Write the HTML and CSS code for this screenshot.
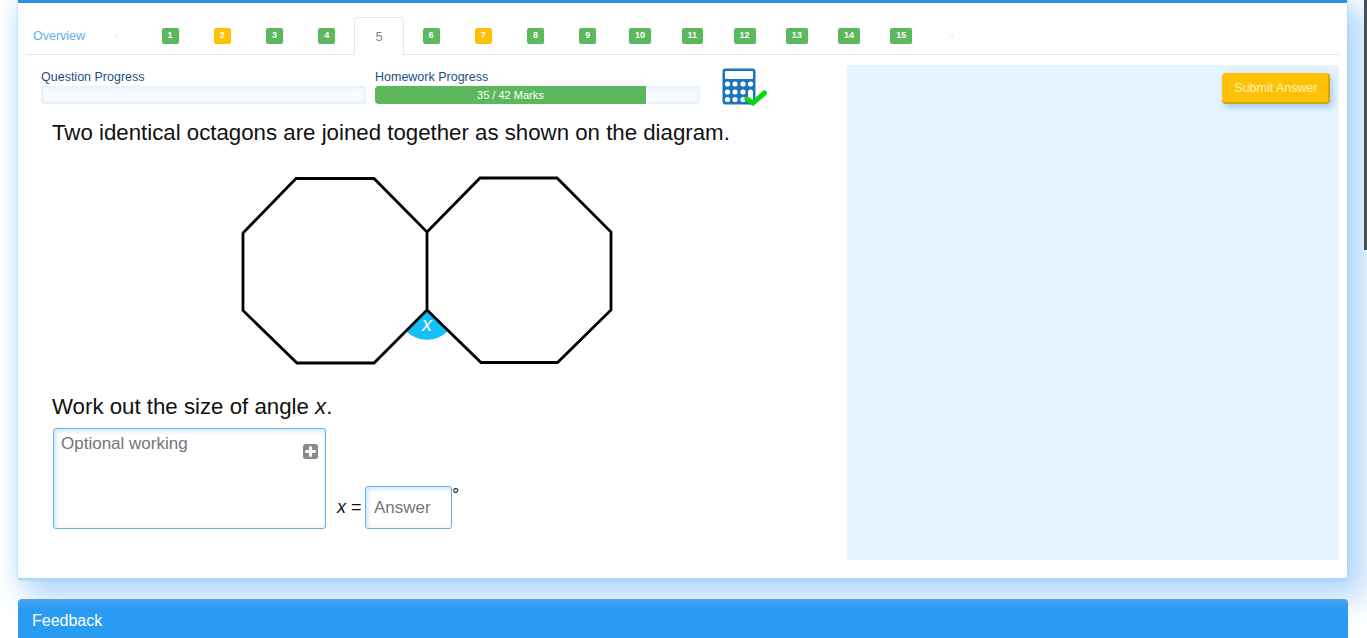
FILE: index.html
```html
<!DOCTYPE html>
<html lang="en">
<head>
<meta charset="utf-8">
<title>Question 5</title>
<link rel="stylesheet" href="styles.css">
</head>
<body>
<div class="scrollthumb"></div>
<main class="panel">
  <nav class="tabs">
    <a class="tab-overview">Overview</a>
    <span class="arrow arrow-left">«</span>
    <div class="tab"><span class="badge green">1</span></div>
    <div class="tab"><span class="badge amber">2</span></div>
    <div class="tab"><span class="badge green">3</span></div>
    <div class="tab"><span class="badge green">4</span></div>
    <div class="tab active">5</div>
    <div class="tab"><span class="badge green">6</span></div>
    <div class="tab"><span class="badge amber">7</span></div>
    <div class="tab"><span class="badge green">8</span></div>
    <div class="tab"><span class="badge green">9</span></div>
    <div class="tab"><span class="badge green">10</span></div>
    <div class="tab"><span class="badge green">11</span></div>
    <div class="tab"><span class="badge green">12</span></div>
    <div class="tab"><span class="badge green">13</span></div>
    <div class="tab"><span class="badge green">14</span></div>
    <div class="tab"><span class="badge green">15</span></div>
    <span class="arrow arrow-right">»</span>
  </nav>
  <div class="content">
    <section class="question">
      <div class="progress-row">
        <div class="progress-col">
          <div class="progress-label">Question Progress</div>
          <div class="bar"></div>
        </div>
        <div class="progress-col">
          <div class="progress-label">Homework Progress</div>
          <div class="bar"><div class="bar-fill" style="width:83.3%">35 / 42 Marks</div></div>
        </div>
        <svg class="calc" width="46" height="38" viewBox="0 0 46 38" aria-hidden="true">
          <rect x="0.5" y="0.5" width="33" height="36" rx="3" fill="#1b75bb"/>
          <rect x="3" y="3" width="28" height="8" rx="1" fill="#fff"/>
          <g fill="#fff">
            <circle cx="5.500" cy="16" r="2.600"/><circle cx="13" cy="16" r="2.600"/><circle cx="21" cy="16" r="2.600"/><circle cx="28.500" cy="16" r="2.600"/>
            <circle cx="5.500" cy="24" r="2.600"/><circle cx="13" cy="24" r="2.600"/><circle cx="21" cy="24" r="2.600"/>
            <circle cx="5.500" cy="31.500" r="2.600"/><circle cx="13" cy="31.500" r="2.600"/><circle cx="21" cy="31.500" r="2.600"/>
            <rect x="26" y="21.500" width="5" height="12" rx="2.500"/>
          </g>
          <path d="M25 31 L31 35 L42.500 25" fill="none" stroke="#0bd60f" stroke-width="5" stroke-linecap="round"/>
        </svg>
      </div>
      <p class="prompt">Two identical octagons are joined together as shown on the diagram.</p>
      <svg class="diagram" width="372" height="190" viewBox="0 0 372 190" aria-hidden="true">
        <path d="M187 137 L166 158 A29.700 29.700 0 0 0 208 158 Z" fill="#14c0f7"/>
        <g fill="none" stroke="#000" stroke-width="2.800" stroke-linejoin="miter">
          <path d="M56 5.500 L134 5.500 L187 59 L187 137 L134 190 L57 190 L3 137.500 L3 60 Z"/>
          <path d="M187 59 L240 5 L317 5 L371 59 L371 137 L317.500 189.500 L241 189.500 L187 137"/>
        </g>
        <text class="angle-label" x="187" y="158" text-anchor="middle">x</text>
      </svg>
      <p class="prompt work">Work out the size of angle <i>x</i>.</p>
      <div class="answer-row">
        <div class="working">
          <span class="placeholder">Optional working</span>
          <svg class="plus" width="15" height="15" viewBox="0 0 15 15" aria-hidden="true">
            <rect width="15" height="15" rx="2.500" fill="#8a8a8a"/>
            <path d="M7.500 3.500 V11.500 M3.500 7.500 H11.500" stroke="#fff" stroke-width="3" stroke-linecap="round"/>
          </svg>
        </div>
        <span class="equation"><i>x</i> =</span>
        <div class="answer"><span class="placeholder">Answer</span></div>
        <span class="degree">°</span>
      </div>
    </section>
    <aside class="side">
      <button class="submit" type="button">Submit Answer</button>
    </aside>
  </div>
</main>
<section class="feedback">Feedback</section>
</body>
</html>
```
FILE: styles.css
```css
* { box-sizing: border-box; }
html, body { margin: 0; height: 638px; overflow: hidden; }
body {
  position: relative;
  padding: 0 20px 0 18px;
  background: #fff;
  font-family: "Liberation Sans", Arial, sans-serif;
  color: #111;
}
.scrollthumb {
  position: absolute;
  top: 0;
  right: 0;
  width: 3px;
  height: 250px;
  background: #4a4d52;
  z-index: 2;
}
.panel {
  height: 580px;
  padding: 0 8px;
  background: #fff;
  border-top: 3px solid #2f8ee6;
  border-bottom: 2px solid #b0d8fb;
  border-radius: 0 0 4px 4px;
  box-shadow: 0 0 2px rgba(70, 160, 245, .5), 0 0 22px 2px rgba(110, 180, 250, .22), 14px 14px 30px 6px rgba(90, 170, 250, .4);
}
.tabs {
  display: flex;
  align-items: stretch;
  height: 38px;
  margin-top: 14px;
  border-bottom: 1px solid #d4eafb;
  font-size: 12.500px;
}
.tab-overview {
  display: flex;
  align-items: center;
  width: 70px;
  padding-left: 7px;
  color: #61aef0;
}
.arrow {
  display: flex;
  align-items: center;
  color: #eef0f3;
  font-size: 10px;
}
.arrow-left { width: 48px; padding-left: 18px; }
.arrow-right { padding-left: 21px; }
.tab {
  display: flex;
  align-items: center;
  justify-content: center;
  width: 52.250px;
}
.badge {
  display: block;
  min-width: 16px;
  height: 16px;
  padding: 0 6px;
  margin-top: 1px;
  border-radius: 2px;
  color: #fff;
  font-size: 9px;
  font-weight: 700;
  line-height: 15px;
  text-align: center;
}
.green { background: #5cb85c; }
.amber { background: #ffc107; }
.tab.active {
  width: 50px;
  margin: 0 1px -1px 1px;
  background: #fff;
  border: 1px solid #d4eafb;
  border-bottom-color: #fff;
  border-radius: 4px 4px 0 0;
  color: #888;
  font-size: 13px;
}
.content {
  display: flex;
  justify-content: space-between;
  padding-top: 10px;
}
.question { width: 820px; padding-left: 15px; }
.progress-row {
  display: flex;
  gap: 9px;
  height: 54px;
}
.progress-col { width: 325px; }
.progress-label {
  height: 21px;
  padding-top: 5px;
  color: #1d4f7c;
  font-size: 12.500px;
  line-height: 15px;
}
.bar {
  height: 18px;
  background: #f7fbff;
  border-radius: 4px;
  box-shadow: inset 0 0 5px rgba(120, 185, 245, .3);
  overflow: hidden;
}
.bar-fill {
  height: 18px;
  background: #5cb85c;
  color: #fff;
  font-size: 11px;
  line-height: 18px;
  text-align: center;
}
.calc { display: block; margin: 3px 0 0 13px; }
.prompt {
  margin: 0;
  padding-left: 11px;
  font-size: 22.250px;
  line-height: 28px;
  color: #111;
}
.diagram {
  display: block;
  margin: 26px 0 0 199px;
  overflow: visible;
}
.angle-label {
  fill: #fff;
  font-size: 20px;
  font-style: italic;
}
.work { margin-top: 30px; }
.answer-row {
  position: relative;
  display: flex;
  align-items: flex-end;
  margin: 7px 0 0 12px;
}
.working {
  position: relative;
  width: 273px;
  height: 101px;
  padding: 4px 7px;
  border: 1px solid #62b1ec;
  border-radius: 3px;
  box-shadow: inset 2px 2px 5px rgba(100, 175, 245, .3);
}
.placeholder {
  color: #757575;
  font-size: 17px;
  line-height: 22px;
}
.plus {
  position: absolute;
  top: 15px;
  right: 7px;
}
.equation {
  width: 39px;
  padding: 0 0 11px 11px;
  font-size: 18px;
  line-height: 22px;
  white-space: nowrap;
}
.answer {
  width: 87px;
  height: 43px;
  padding: 10px 8px;
  border: 1px solid #62b1ec;
  border-radius: 3px;
  box-shadow: inset 2px 2px 5px rgba(100, 175, 245, .3);
}
.degree {
  height: 43px;
  font-size: 18px;
  line-height: 18px;
}
.side {
  display: flex;
  align-items: flex-start;
  justify-content: flex-end;
  width: 492px;
  height: 495px;
  padding: 8px 9px;
  background: #e5f4fe;
  border-radius: 4px;
}
.submit {
  width: 108px;
  height: 31px;
  padding: 0 0 0 2px;
  background: #ffc107;
  border: 0;
  border-right: 2px solid #d8a406;
  border-bottom: 2px solid #d8a406;
  border-radius: 4px;
  box-shadow: 2px 3px 6px rgba(90, 165, 240, .55);
  color: #fff3b8;
  font-family: inherit;
  font-size: 12.500px;
}
.feedback {
  position: relative;
  height: 60px;
  margin: 19px -1px 0 0;
  padding: 12px 14px;
  background: linear-gradient(180deg, #4ea4ee 0, #2a9bf3 10px, #2a9bf3 100%);
  border-radius: 4px 4px 0 0;
  color: #fff;
  font-size: 16px;
  line-height: 20px;
}
```
